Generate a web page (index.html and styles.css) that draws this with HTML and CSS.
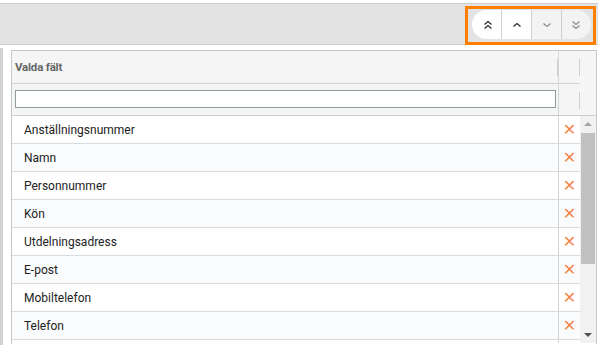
FILE: index.html
```html
<!DOCTYPE html>
<html lang="sv">
<head>
    <meta charset="UTF-8">
    <title>Valda fält</title>
    <link rel="stylesheet" href="styles.css">
</head>
<body>

<div class="toolbar">
    <div class="order-tools">
        <div class="btn-group">
            <button class="order-btn" title="Flytta först">
                <svg width="10" height="10" viewBox="0 0 10 10"><path d="M1.5 4.5 L5 1.5 L8.5 4.5 M1.5 8.5 L5 5.5 L8.5 8.5" fill="none" stroke="#2b2b2b" stroke-width="1.3"/></svg>
            </button>
            <button class="order-btn" title="Flytta upp">
                <svg width="10" height="10" viewBox="0 0 10 10"><path d="M1.5 6.5 L5 3.5 L8.5 6.5" fill="none" stroke="#2b2b2b" stroke-width="1.3"/></svg>
            </button>
            <button class="order-btn disabled" title="Flytta ner">
                <svg width="10" height="10" viewBox="0 0 10 10"><path d="M1.5 3.5 L5 6.5 L8.5 3.5" fill="none" stroke="#8a8a8a" stroke-width="1.2"/></svg>
            </button>
            <button class="order-btn disabled" title="Flytta sist">
                <svg width="10" height="10" viewBox="0 0 10 10"><path d="M1.5 1.5 L5 4.5 L8.5 1.5 M1.5 5.5 L5 8.5 L8.5 5.5" fill="none" stroke="#8a8a8a" stroke-width="1.2"/></svg>
            </button>
        </div>
    </div>
</div>

<div class="panel">
    <div class="grid">
        <div class="grid-head">
            <div class="head-cell">Valda fält<span class="resize"></span></div>
            <div class="head-x"><span class="resize"></span></div>
            <div class="head-scroll"></div>
        </div>
        <div class="grid-filter">
            <div class="filter-cell"><input type="text" class="filter-input"></div>
            <div class="filter-x"><span class="resize"></span></div>
            <div class="head-scroll"></div>
        </div>
        <div class="grid-body">
            <div class="rows">
                <div class="row"><span class="name">Anställningsnummer</span><span class="remove">✕</span></div>
                <div class="row"><span class="name">Namn</span><span class="remove">✕</span></div>
                <div class="row"><span class="name">Personnummer</span><span class="remove">✕</span></div>
                <div class="row"><span class="name">Kön</span><span class="remove">✕</span></div>
                <div class="row"><span class="name">Utdelningsadress</span><span class="remove">✕</span></div>
                <div class="row"><span class="name">E-post</span><span class="remove">✕</span></div>
                <div class="row"><span class="name">Mobiltelefon</span><span class="remove">✕</span></div>
                <div class="row"><span class="name">Telefon</span><span class="remove">✕</span></div>
                <div class="row"><span class="name"></span><span class="remove"></span></div>
            </div>
            <div class="scrollbar">
                <span class="arrow-up"></span>
                <div class="thumb"></div>
                <span class="arrow-down"></span>
            </div>
        </div>
    </div>
</div>

</body>
</html>
```

FILE: styles.css
```css
body {
    font-family: Roboto, 'Liberation Sans', sans-serif;
    margin: 0;
    padding: 0;
    background-color: #ffffff;
    color: #222;
}

.toolbar {
    margin-top: 3px;
    height: 40px;
    background: #e3e3e3;
    border-top: 1px solid #cccccc;
    border-bottom: 1px solid #cccccc;
    display: flex;
    justify-content: flex-end;
    align-items: flex-start;
}

.order-tools {
    margin: 2px 2px 0 0;
    border: 3px solid #ff7f00;
    padding: 1px 2px 3px 4px;
    height: 29px;
    position: relative;
    z-index: 1;
}

.btn-group {
    display: flex;
    height: 29px;
    border-radius: 15px;
    overflow: hidden;
}

.order-btn {
    width: 30px;
    height: 29px;
    padding: 0;
    margin: 0;
    border: none;
    border-left: 1px solid #cfcfcf;
    background: #ffffff;
    display: flex;
    align-items: center;
    justify-content: center;
    cursor: pointer;
}

.order-btn:first-child {
    border-left: none;
    width: 29px;
    padding-left: 2px;
}

.order-btn:last-child {
    padding-right: 2px;
}

.order-btn.disabled {
    background: #f3f3f3;
    cursor: default;
}

.panel {
    margin-top: 3px;
    height: 295px;
    border-left: 3px solid #d2d2d2;
    padding: 2px 1px 0 8px;
}

.grid {
    border: 1px solid #c4c8c7;
    border-bottom: none;
    height: 293px;
    overflow: hidden;
}

.grid-head,
.grid-filter {
    display: flex;
    background: #f4f5f4;
}

.grid-head {
    height: 33px;
}

.grid-filter {
    height: 31px;
    border-bottom: 1px solid #c8cccb;
}

.head-cell,
.filter-cell {
    flex: 1;
    position: relative;
    border-right: 1px solid #d4d8d7;
    border-bottom: 1px solid #cfd3d2;
}

.head-cell {
    font-size: 11.5px;
    font-weight: bold;
    color: #666666;
    padding-left: 3px;
    line-height: 32px;
    letter-spacing: -0.2px;
}

.head-x,
.filter-x {
    width: 21px;
    position: relative;
    border-bottom: 1px solid #cfd3d2;
}

.grid-filter .filter-cell,
.grid-filter .filter-x {
    border-bottom: none;
}

.head-scroll {
    width: 16px;
}

.resize {
    position: absolute;
    right: 0;
    top: 8px;
    width: 1px;
    height: 17px;
    background: #cdd1d0;
}

.head-cell .resize {
    background: #c9cdcc;
}

.filter-cell {
    padding: 6px 2px 0 3px;
}

.filter-input {
    display: block;
    box-sizing: border-box;
    width: 100%;
    height: 18px;
    margin: 0;
    border: 1px solid #8e9c9a;
    background: #ffffff;
    font-size: 12px;
}

.grid-body {
    display: flex;
    height: 227px;
}

.rows {
    flex: 1;
    overflow: hidden;
}

.row {
    display: flex;
    height: 27px;
    border-bottom: 1px solid #d9dcdc;
    background: #ffffff;
    font-size: 12px;
}

.row:nth-child(even) {
    background: #f9fbfd;
}

.name {
    flex: 1;
    padding: 1px 0 0 12px;
    line-height: 27px;
    border-right: 1px solid #d2d5d5;
}

.remove {
    width: 21px;
    text-align: center;
    font-family: 'DejaVu Sans', sans-serif;
    font-size: 16px;
    line-height: 28px;
    color: #f4864c;
    cursor: pointer;
}

.scrollbar {
    width: 16px;
    background: #f1f1f1;
    position: relative;
}

.thumb {
    position: absolute;
    left: 1px;
    right: 1px;
    top: 17px;
    height: 131px;
    background: #c1c1c1;
}

.arrow-up,
.arrow-down {
    position: absolute;
    left: 4px;
    width: 0;
    height: 0;
    border-left: 4px solid transparent;
    border-right: 4px solid transparent;
}

.arrow-up {
    top: 6px;
    border-bottom: 4px solid #a3a3a3;
}

.arrow-down {
    bottom: 6px;
    border-top: 4px solid #505050;
}
```
